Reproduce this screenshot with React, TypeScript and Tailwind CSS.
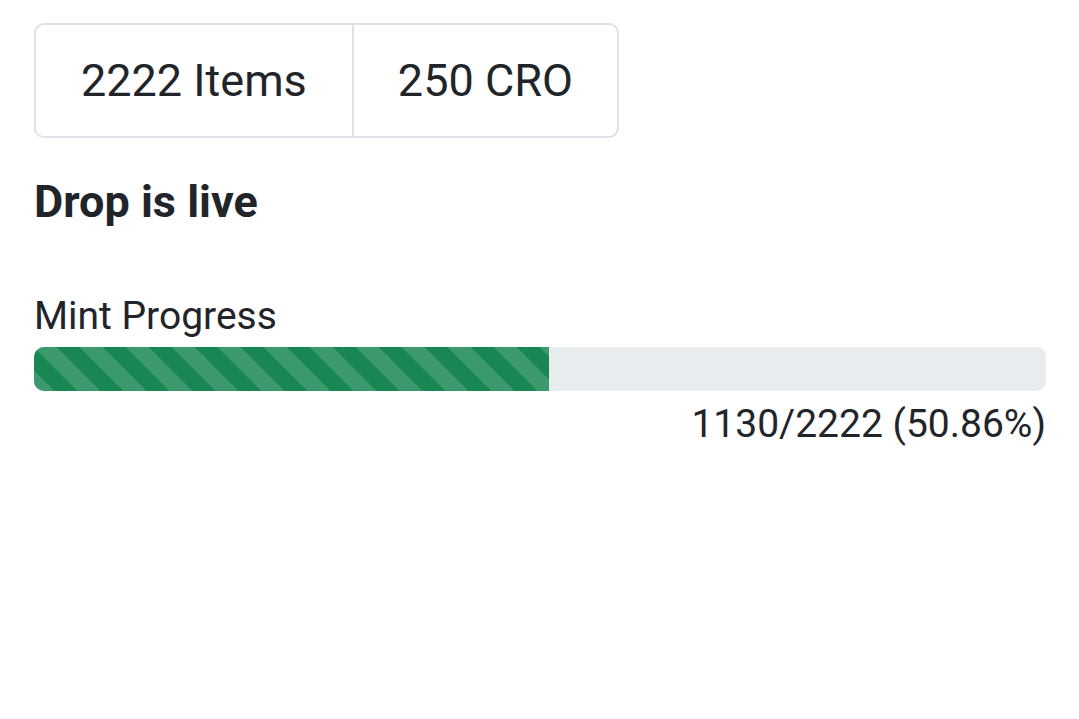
const minted = 1130;
const total = 2222;

export default function App() {
  const pct = (minted / total) * 100;

  return (
    <div className="min-h-screen bg-white px-[34px] pt-[23px] font-['Roboto',sans-serif] text-[#212529]">
      <div className="flex w-max h-[115px] rounded-[10px] border-2 border-[#dee2e6]">
        <div className="flex items-center px-[45px] text-[45px] leading-[1.2]">2222 Items</div>
        <div className="flex items-center px-[44px] text-[45px] leading-[1.2] border-l-2 border-[#dee2e6]">250 CRO</div>
      </div>

      <h5 className="mt-[36px] text-[45px] leading-[55px] font-bold">Drop is live</h5>

      <div className="mt-[63px] text-[39px] leading-[48px]">Mint Progress</div>
      <div className="mt-[7px] h-[44px] w-[1012px] rounded-[10px] bg-[#e9ecef] overflow-hidden flex">
        <div
          className="h-full bg-[#198754] bg-[linear-gradient(45deg,rgba(255,255,255,.15)_25%,transparent_25%,transparent_50%,rgba(255,255,255,.15)_50%,rgba(255,255,255,.15)_75%,transparent_75%,transparent)] bg-[length:46px_46px]"
          style={{ width: `${pct}%` }}
        />
      </div>
      <div className="mt-[9px] w-[1012px] text-right text-[39px] leading-[48px]">
        {minted}/{total} ({pct.toFixed(2)}%)
      </div>
    </div>
  );
}
